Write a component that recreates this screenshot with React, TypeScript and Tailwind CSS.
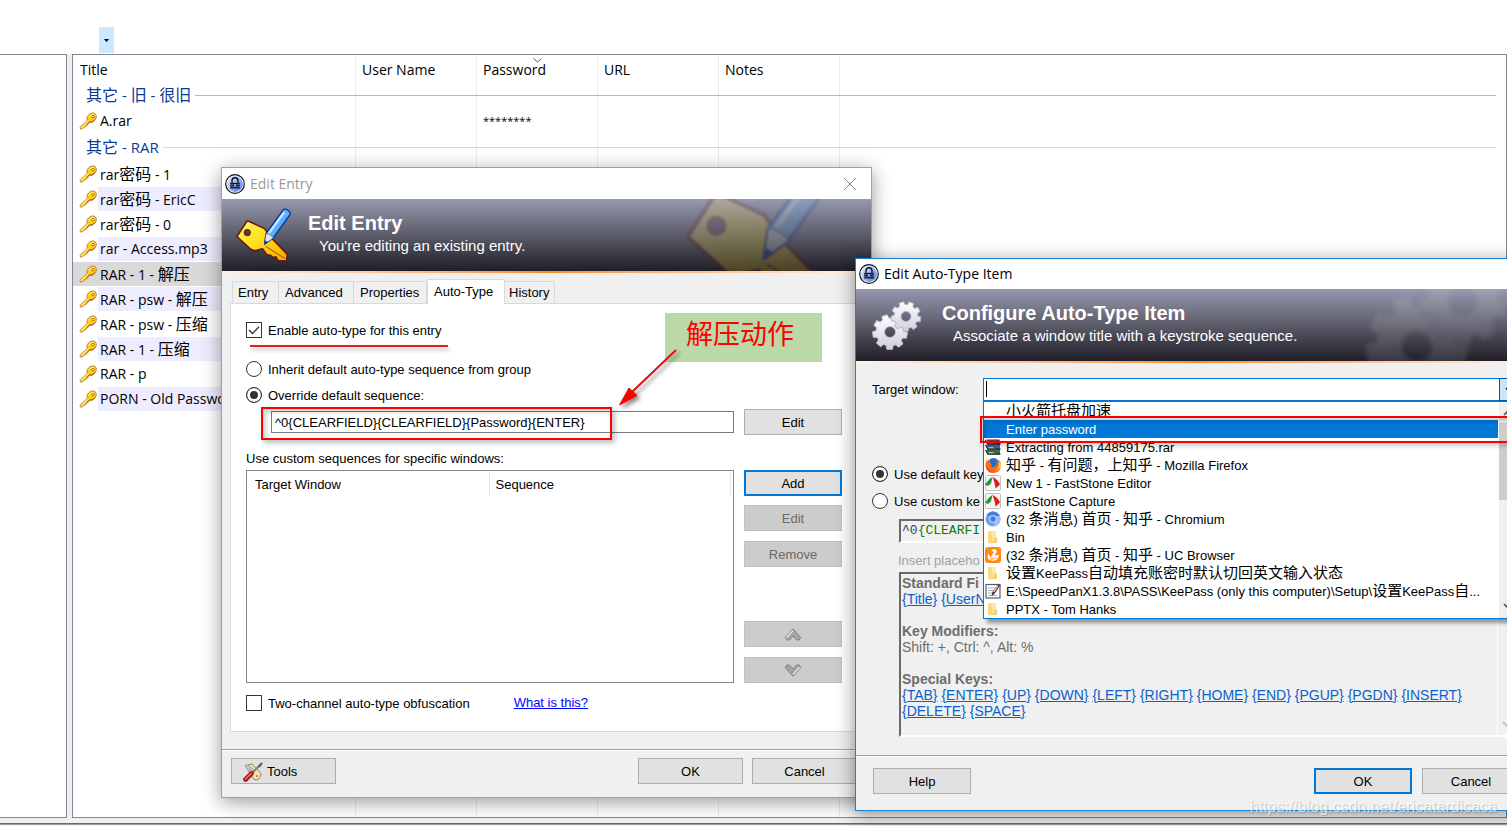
import React from "react";

const UI = "font-['Liberation_Sans','Noto_Sans_CJK_SC',sans-serif]";
const SYS = "font-['Open_Sans','Noto_Sans_CJK_SC',sans-serif]";

/* Sets runs of Chinese characters in their own size next to Latin text. */
function Mixed({ text, cjk }: { text: string; cjk: string }) {
  const parts = text.split(/([\u3400-\u9fff\uff0c]+)/).filter(Boolean);
  return (
    <>
      {parts.map((p, i) =>
        /[\u3400-\u9fff\uff0c]/.test(p) ? (
          <span key={i} className={cjk}>{p}</span>
        ) : (
          <React.Fragment key={i}>{p}</React.Fragment>
        ),
      )}
    </>
  );
}

function KeyIcon() {
  return (
    <svg viewBox="0 0 18 18" className="h-[18px] w-[18px] shrink-0" aria-hidden="true">
      <path
        d="M1 15.2 8.3 8.4C7.600 6.400 8 4.500 9.600 2.900 11.500.8 14.700.3 16.400 1.900 18 3.500 17.500 6.500 15.500 8.500c-1.600 1.600-3.300 2.100-5.100 1.600l-1.200 1.200-.3 1.500-1.500.2-.4 1.500-1.600.3L4 16.500l-2.500.6Z"
        fill="#fc1"
        stroke="#b98a3a"
        strokeWidth="1"
      />
      <path d="M2 15.800 9.400 8.900" stroke="#ffee70" strokeWidth="1.200" />
      <path d="M10 5.500c.8-2.200 3-3.600 5-3" stroke="#fff3a0" strokeWidth="1" fill="none" />
      <path d="m8 12.600 2.500-2.800c2 .6 4-.2 5.400-2.200" stroke="#8f3a1c" strokeWidth=".8" fill="none" />
      <circle cx="13.900" cy="4.600" r="1.200" fill="#fff" stroke="#8f5a1c" strokeWidth=".8" />
    </svg>
  );
}

function LockIcon({ id }: { id: string }) {
  return (
    <svg viewBox="0 0 20 20" className="h-5 w-5 shrink-0" aria-hidden="true">
      <defs>
        <linearGradient id={id} x1="0" y1="0" x2="1" y2="1">
          <stop offset="0" stopColor="#f0f4ff" />
          <stop offset=".5" stopColor="#9db4fa" />
          <stop offset="1" stopColor="#4a70ee" />
        </linearGradient>
      </defs>
      <circle cx="10" cy="10" r="9.300" fill="#fff" stroke="#111" strokeWidth="1.200" />
      <circle cx="10" cy="10" r="7.900" fill={`url(#${id})`} />
      <path d="M7 8.800V6.800a3 3 0 0 1 6 0v2" fill="none" stroke="#111" strokeWidth="1.400" />
      <rect x="5.200" y="8.800" width="9.600" height="5.700" fill="#15171f" />
      <path d="M5 10.700h10M5 12.700h10" stroke="#7f98ea" strokeWidth=".6" />
      <rect x="9.300" y="10.200" width="1.400" height="2.400" fill="#c8d4ff" />
    </svg>
  );
}

function EditKeyArt({ className, id }: { className: string; id: string }) {
  return (
    <svg viewBox="0 0 58 58" className={className} aria-hidden="true">
      <defs>
        <linearGradient id={`${id}k`} x1="0" y1="0" x2="1" y2="1">
          <stop offset="0" stopColor="#fff36a" />
          <stop offset=".45" stopColor="#ffe11a" />
          <stop offset="1" stopColor="#f7a400" />
        </linearGradient>
        <linearGradient id={`${id}p`} x1="0" y1="0" x2="1" y2="1">
          <stop offset="0" stopColor="#8fd0ff" />
          <stop offset=".5" stopColor="#5fb0ff" />
          <stop offset="1" stopColor="#0a3fd0" />
        </linearGradient>
      </defs>
      <path
        d="M1 30 11 14.500 13 14.500 29 22 36 31.500 52 48 51.500 55 43 54.500 40.500 50.500 38 51.500 35 49 31.500 48.500 27 42.500 19 44.500 15 43Z"
        fill={`url(#${id}k)`}
        stroke="#6a1608"
        strokeWidth="1.500"
        strokeLinejoin="round"
      />
      <path d="m30 40 20 12.500" stroke="#b86a00" strokeWidth="1.200" />
      <circle cx="11.500" cy="26" r="3" fill="#4c3a4a" stroke="#7a2a10" strokeWidth="1.400" />
      <path d="m29 38 1.500-11L48.500 2.500c2.500-1 6.500 1.500 7 4.500L38 31.500Z" fill={`url(#${id}p)`} stroke="#0a2f96" strokeWidth="1.300" strokeLinejoin="round" />
      <path d="m29 38 1.500-11c2.500 0 6 2 7.500 4.500Z" fill="#e8e6f2" stroke="#3a4a9a" strokeWidth=".6" />
      <path d="M33.500 26.500 49 5.500" stroke="#c9ecff" strokeWidth="2" />
      <path d="m29 38 .5-4 3 1.800Z" fill="#0a1f8a" />
    </svg>
  );
}

function gearPath(cx: number, cy: number, ro: number, ri: number, hole: number) {
  const n = 9;
  let d = "";
  for (let i = 0; i < n; i++) {
    const a = (i / n) * Math.PI * 2 + 0.2;
    const pts = [
      [ri, a - 0.24],
      [ro, a - 0.16],
      [ro, a + 0.16],
      [ri, a + 0.24],
    ];
    for (const [r, t] of pts) {
      d += `${d ? "L" : "M"}${(cx + r * Math.cos(t)).toFixed(2)} ${(cy + r * Math.sin(t)).toFixed(2)}`;
    }
  }
  return `${d}ZM${cx - hole} ${cy}a${hole} ${hole} 0 1 0 ${hole * 2} 0a${hole} ${hole} 0 1 0 ${-hole * 2} 0Z`;
}

function GearsArt({ className, id }: { className: string; id: string }) {
  return (
    <svg viewBox="0 0 50 50" className={className} aria-hidden="true">
      <defs>
        <linearGradient id={id} x1="0" y1="0" x2="0" y2="1">
          <stop offset="0" stopColor="#ffffff" />
          <stop offset="1" stopColor="#cfcfdd" />
        </linearGradient>
      </defs>
      <path d={gearPath(18, 31, 17.5, 14, 5.5)} fill={`url(#${id})`} stroke="#c4c4d2" strokeWidth="1" strokeLinejoin="round" fillRule="evenodd" />
      <path d={gearPath(34, 15.5, 15, 12, 5)} fill={`url(#${id})`} stroke="#b4b4c6" strokeWidth="1" strokeLinejoin="round" fillRule="evenodd" />
    </svg>
  );
}

function Banner({ title, sub, art, ghost }: { title: string; sub: string; art: React.ReactNode; ghost: React.ReactNode }) {
  return (
    <div className="shrink-0">
      <div className="relative flex h-[72px] overflow-hidden bg-linear-to-b from-[#9799af] via-[#5c5c6a] to-[#201f29]">
        {ghost}
        <div className="w-[86px] shrink-0 pt-2 pl-[14px]">{art}</div>
        <div className="relative pt-3 text-white">
          <h2 className="text-[20px] leading-6 font-bold">{title}</h2>
          <p className="pl-[11px] text-[15px] leading-[22px]">{sub}</p>
        </div>
      </div>
      <div className="h-[2px] bg-linear-to-r from-[#fff4ea] via-[#ff8a1e] to-[#fff4ea]" />
    </div>
  );
}

const BTN = "flex h-[26px] shrink-0 items-center justify-center border pt-px text-[13px]";
const NORMAL = "border-[#adadad] bg-[#e1e1e1] text-black";
const DISABLED = "border-[#bfbfbf] bg-[#cccccc] text-[#6a6a6a]";
const DEFAULT = "border-2 border-[#0078d7] bg-[#e1e1e1] text-black";
const RADIO =
  "h-4 w-4 shrink-0 appearance-none rounded-full border border-[#333] bg-white checked:bg-[#333] checked:shadow-[inset_0_0_0_3px_white]";

function Check({ id, label, checked }: { id: string; label: string; checked?: boolean }) {
  return (
    <span className="flex h-4 items-center gap-[6px]">
      <span className="relative h-4 w-4">
        <input id={id} type="checkbox" defaultChecked={checked} className="peer block h-4 w-4 appearance-none border border-[#333] bg-white" />
        <svg viewBox="0 0 16 16" className="pointer-events-none absolute inset-0 hidden h-4 w-4 peer-checked:block" aria-hidden="true">
          <path d="m3 8 3.500 3.500L13 4.800" fill="none" stroke="#333" strokeWidth="1.300" />
        </svg>
      </span>
      <label htmlFor={id} className="pt-[2px]">{label}</label>
    </span>
  );
}

function Radio({ id, name, label, checked }: { id: string; name: string; label: string; checked?: boolean }) {
  return (
    <span className="flex h-4 items-center gap-[6px]">
      <input id={id} type="radio" name={name} defaultChecked={checked} className={RADIO} />
      <label htmlFor={id} className="pt-[2px]">{label}</label>
    </span>
  );
}

const ENTRIES = [
  "rar密码 - 1",
  "rar密码 - EricC",
  "rar密码 - 0",
  "rar - Access.mp3",
  "RAR - 1 - 解压",
  "RAR - psw - 解压",
  "RAR - psw - 压缩",
  "RAR - 1 - 压缩",
  "RAR - p",
  "PORN - Old Password",
];

function GroupRow({ text, height, line }: { text: string; height: string; line: string }) {
  return (
    <tr>
      <th colSpan={6} scope="rowgroup" className="p-0 text-left font-normal">
        <div className={`flex items-center gap-1 pr-[10px] pl-[13px] text-[15px] leading-4 text-[#0a3a9c] ${height}`}>
          <span className="whitespace-nowrap"><Mixed text={text} cjk="text-[16px]" /></span>
          <span className={line} />
        </div>
      </th>
    </tr>
  );
}

function EntryRow({ text, shade, selected, password }: { text: string; shade?: boolean; selected?: boolean; password?: string }) {
  const fill = selected ? "bg-[#d9d9d9]" : shade ? "bg-[#eeedff]" : "";
  return (
    <tr className="h-[25px]">
      <td className="p-0">
        <div className={`flex h-6 items-center pl-[6px] ${selected ? "bg-[#d9d9d9]" : ""}`}>
          <KeyIcon />
          <span className={`ml-px flex h-6 flex-1 items-center overflow-hidden pl-[2px] whitespace-pre ${fill}`}>
            <span><Mixed text={text} cjk="text-[16px]" /></span>
          </span>
        </div>
      </td>
      <td className="p-0"><div className={`h-6 ${fill}`} /></td>
      <td className="p-0"><div className={`h-6 pl-[6px] text-[11px] leading-6 ${fill}`}>{password}</div></td>
      <td className="p-0"><div className={`h-6 ${fill}`} /></td>
      <td className="p-0"><div className={`h-6 ${fill}`} /></td>
      <td className="p-0" />
    </tr>
  );
}

function MainWindow() {
  return (
    <div className={`flex min-h-screen flex-col bg-white text-[14px] text-black ${SYS}`}>
      <div className="flex h-[54px] shrink-0 items-end pl-[99px]">
        <button aria-label="Toolbar options" className="mb-[1px] flex h-[26px] w-[15px] items-center justify-center bg-[#cce8ff]">
          <svg viewBox="0 0 5 3" className="h-[3px] w-[5px]" aria-hidden="true"><path d="M0 0h5L2.500 3Z" fill="#000" /></svg>
        </button>
      </div>
      <div className="flex flex-1 gap-[5px] bg-[#f0f0f0]">
        <div className="w-[67px] shrink-0 border border-l-0 border-[#828790] bg-white" />
        <div className="relative flex-1 border border-[#828790] bg-white">
          <div aria-hidden="true" className="absolute inset-0 flex">
            <div className="w-[283px] border-r border-[#e5edf9]" />
            <div className="w-[121px] border-r border-[#e5edf9]" />
            <div className="w-[121px] border-r border-[#e5edf9]" />
            <div className="w-[121px] border-r border-[#e5edf9]" />
            <div className="w-[121px] border-r border-[#e5edf9]" />
          </div>
          <table className="relative w-full table-fixed border-collapse">
            <colgroup>
              <col className="w-[283px]" />
              <col className="w-[121px]" />
              <col className="w-[121px]" />
              <col className="w-[121px]" />
              <col className="w-[121px]" />
              <col />
            </colgroup>
            <thead>
              <tr className="h-[27px] text-left">
                <th className="p-0 pt-[2px] pl-[7px] font-normal">Title</th>
                <th className="p-0 pt-[2px] pl-[6px] font-normal">User Name</th>
                <th className="relative p-0 pt-[2px] pl-[6px] font-normal">
                  Password
                  <svg viewBox="0 0 9 5" className="absolute top-[3px] left-[56px] h-[5px] w-[9px]" aria-hidden="true">
                    <path d="m.5.500 4 3.500 4-3.500" fill="none" stroke="#555" strokeWidth="1" />
                  </svg>
                </th>
                <th className="p-0 pt-[2px] pl-[6px] font-normal">URL</th>
                <th className="p-0 pt-[2px] pl-[6px] font-normal">Notes</th>
                <th className="p-0" />
              </tr>
            </thead>
            <tbody>
              <GroupRow text="其它 - 旧 - 很旧" height="h-[26px]" line="h-px flex-1 bg-[#a9b8de]" />
              <EntryRow text="A.rar" password="********" />
              <GroupRow text="其它 - RAR" height="h-[28px]" line="h-px flex-1 bg-[#d0d8ee]" />
              {ENTRIES.map((t, i) => (
                <EntryRow key={t} text={t} shade={i % 2 === 1} selected={i === 4} />
              ))}
            </tbody>
          </table>
        </div>
      </div>
      <div className="h-2 shrink-0 bg-[#f0f0f0] pt-[5px]"><div className="h-[2px] border-t border-[#696969] bg-[#a0a0a0]" /></div>
    </div>
  );
}

function UpDown({ down }: { down?: boolean }) {
  return (
    <svg viewBox="0 0 18 13" className={`h-[13px] w-[18px] ${down ? "rotate-180" : ""}`} aria-hidden="true">
      <path d="M9 .8 16.800 9.500 15 12.200 12.200 11.800 9 8 5.800 11.800 3 12.200 1.200 9.500Z" fill="#a4a4a4" stroke="#858585" strokeWidth="1" strokeLinejoin="round" />
      <path d="M2.500 9.800 9 2.500" stroke="#e4e4e4" strokeWidth="1.400" />
    </svg>
  );
}

function EditEntryDialog() {
  const tab = "flex h-[22px] items-center border-t border-r border-[#d9d9d9] bg-[#f0f0f0] pt-px";
  return (
    <section
      aria-label="Edit Entry"
      className={`absolute top-[167px] left-[221px] flex w-[651px] flex-col border border-[#a0a0a0] bg-[#f0f0f0] text-[13px] leading-4 text-black shadow-[0_4px_18px_rgba(0,0,0,0.4)] ${UI}`}
    >
      <header className={`flex h-[31px] items-center bg-white pl-[3px] text-[14px] text-[#999] ${SYS}`}>
        <LockIcon id="lockA" />
        <h1 className="ml-[5px]">Edit Entry</h1>
        <button aria-label="Close" className="mr-[15px] ml-auto">
          <svg viewBox="0 0 12 12" className="h-3 w-3" aria-hidden="true"><path d="m0 0 12 12M12 0 0 12" stroke="#8a8a8a" strokeWidth="1" /></svg>
        </button>
      </header>
      <Banner
        title="Edit Entry"
        sub="You're editing an existing entry."
        art={<EditKeyArt id="ekA" className="h-[57px] w-[57px]" />}
        ghost={<EditKeyArt id="ekB" className="absolute -top-11 right-7 h-[158px] w-[158px] opacity-20 blur-[1px]" />}
      />
      <div className="px-2 pt-[6px]">
        <div role="tablist" className="flex items-end pl-[2px]">
          <button role="tab" className={`${tab} w-[47px] border-l pl-[5px]`}>Entry</button>
          <button role="tab" className={`${tab} w-[75px] pl-[6px]`}>Advanced</button>
          <button role="tab" className={`${tab} w-[73px] pl-[6px]`}>Properties</button>
          <button role="tab" aria-selected="true" className="relative -mb-px flex h-[25px] w-[78px] items-center border border-b-0 border-[#d9d9d9] bg-white pl-[6px]">Auto-Type</button>
          <button role="tab" className={`${tab} w-[50px] pl-1`}>History</button>
        </div>
        <div role="tabpanel" className="border border-[#d9d9d9] bg-white pt-[18px] pr-5 pb-5 pl-[15px]">
          <Check id="enable" label="Enable auto-type for this entry" checked />
          <div className="mt-[7px] ml-1 h-[2px] w-[198px] bg-[#e02020] shadow-[1px_3px_4px_rgba(0,0,0,0.3)]" />
          <div className="mt-[14px] flex flex-col gap-[10px]">
            <Radio id="inherit" name="seq" label="Inherit default auto-type sequence from group" />
            <Radio id="override" name="seq" label="Override default sequence:" checked />
          </div>
          <div className="relative mt-[6px] flex items-center gap-[10px]">
            <input
              aria-label="Default sequence"
              defaultValue="^0{CLEARFIELD}{CLEARFIELD}{Password}{ENTER}"
              className="ml-[25px] h-[22px] w-[463px] border border-[#7a7a7a] bg-white pl-[3px] text-[13px]"
            />
            <button className={`${BTN} ${NORMAL} w-[98px]`}>Edit</button>
            <div className="pointer-events-none absolute -top-[2px] left-[15px] h-[33px] w-[351px] border-2 border-[#f00] shadow-[3px_3px_5px_rgba(0,0,0,0.25),inset_3px_3px_5px_rgba(0,0,0,0.2)]" />
          </div>
          <p className="mt-4">Use custom sequences for specific windows:</p>
          <div className="mt-[3px] flex gap-[10px]">
            <div className="w-[488px] border border-[#828790] bg-white pt-px pr-[2px]">
              <table className="w-full table-fixed border-collapse">
                <thead>
                  <tr className="h-6 text-left">
                    <th className="w-[242px] border-r border-[#e5e5e5] p-0 pt-[2px] pl-2 font-normal">Target Window</th>
                    <th className="border-r border-[#e5e5e5] p-0 pt-[2px] pl-[6px] font-normal">Sequence</th>
                  </tr>
                </thead>
              </table>
            </div>
            <div className="flex w-[98px] flex-col">
              <button className={`${BTN} ${DEFAULT}`}>Add</button>
              <button disabled className={`${BTN} ${DISABLED} mt-[9px]`}>Edit</button>
              <button disabled className={`${BTN} ${DISABLED} mt-[10px]`}>Remove</button>
              <button disabled aria-label="Move up" className={`${BTN} ${DISABLED} mt-[54px]`}><UpDown /></button>
              <button disabled aria-label="Move down" className={`${BTN} ${DISABLED} mt-[10px]`}><UpDown down /></button>
            </div>
          </div>
          <div className="mt-3 flex items-center gap-11">
            <Check id="obfuscate" label="Two-channel auto-type obfuscation" />
            <a href="#help" className="text-[#0000ff] underline">What is this?</a>
          </div>
        </div>
      </div>
      <footer className="mt-[17px] flex gap-[9px] border-t border-[#a0a0a0] pt-2 pr-[14px] pb-[13px] pl-[9px] shadow-[inset_0_1px_0_white]">
        <button className={`${BTN} ${NORMAL} mr-auto w-[105px] !justify-start gap-1 pl-[11px]`}>
          <svg viewBox="0 0 20 20" className="h-5 w-5" aria-hidden="true">
            <path d="M2 3.500 9 2l9 9.500-.5 3.500-3.500 3-3-.5Z" fill="#f2e2a8" stroke="#8f8468" strokeWidth="1" />
            <path d="m2 4 7 6M5 3l7 7" stroke="#b8b8b8" strokeWidth="2" />
            <path d="m8 12 8.500-8.500" stroke="#7f858c" strokeWidth="2" />
            <path d="m15.500 5 3.500-4" stroke="#596068" strokeWidth="2.200" />
            <path d="m2.500 17.500 6-6" stroke="#a81818" strokeWidth="4.600" strokeLinecap="round" />
            <path d="m2.500 17 5.500-5.500" stroke="#ff6a5a" strokeWidth="1.600" strokeLinecap="round" />
            <circle cx="14" cy="14" r="1" fill="#a08540" />
          </svg>
          Tools
        </button>
        <button className={`${BTN} ${NORMAL} w-[105px]`}>OK</button>
        <button className={`${BTN} ${NORMAL} w-[105px]`}>Cancel</button>
      </footer>
    </section>
  );
}

function AppIcon({ kind }: { kind: string }) {
  const c = "h-4 w-4 shrink-0";
  switch (kind) {
    case "rar":
      return (
        <svg viewBox="0 0 16 16" className={c} aria-hidden="true">
          <path d="M2 .5h12.500l1 4.500H3Z" fill="#8b1c4c" />
          <path d="M1.500 5.500H15v4.500H3Z" fill="#2a6fc0" />
          <path d="M1.500 10.500H15V15H3Z" fill="#1e7a3a" />
          <path d="M.5 1 3 5.200h12.500M.5 6 3 10.200h12.500M.5 11 3 15.200h12.500" stroke="#1a1010" strokeWidth="1.200" fill="none" />
          <path d="M3.500 3.800h5M3.500 8.800h5M3.500 13.800h5" stroke="#e8e0d0" strokeWidth="1" />
          <path d="M10 .5v4.500M10 5.500V10M10 10.500V15" stroke="#8a4a2a" strokeWidth="1.600" />
        </svg>
      );
    case "firefox":
      return (
        <svg viewBox="0 0 16 16" className={c} aria-hidden="true">
          <circle cx="8.500" cy="7.500" r="6.500" fill="#1f6fd0" />
          <path d="M1 5C.3 7.500.3 10 1.500 12A7.500 7.500 0 0 0 15.700 9c.4-2.500-.2-4.600-1.700-6.200.3 1.500.2 2.500-.2 3.200C13 3.500 11.500 1.500 9.500.8c2 2 3 4.500 2 7-.8 2-3 2.600-4.500 2C5.500 9.200 5.500 8 7 7.500 6 6.500 5 6 5 5c-.5-1 0-1.800.5-2.500C4 2.500 3 3.500 2.500 4.200 2 4 1.700 3 1.800 2.500 1.300 3.200 1 4 1 5Z" fill="#ff6a13" />
          <path d="M13.800 6c.5 3-1 6-4 7 3.500 0 5.500-2 6-4.500.2-2.200-.3-4.200-1.800-5.700.3 1.200.2 2.200-.2 3.200Z" fill="#ffd02e" />
          <path d="M1.300 7c0 4 2.700 7 6.700 7.500C4.500 15.500.5 12.500 1.300 7Z" fill="#e2212d" />
        </svg>
      );
    case "fast":
      return (
        <svg viewBox="0 0 16 16" className={c} aria-hidden="true">
          <rect x=".5" y=".5" width="15" height="15" rx="1" fill="#f6f6f6" stroke="#c0c0c0" />
          <path d="M0 9.500 4.500 4 7.500 2 6 8.500 3 11Z" fill="#1f9a34" />
          <path d="M7.500 2C10.500 3 14 6.500 15 9.500L10.500 13.500C10 9 9 5.500 7.500 2Z" fill="#e81818" />
        </svg>
      );
    case "chromium":
      return (
        <svg viewBox="0 0 16 16" className={c} aria-hidden="true">
          <circle cx="8" cy="8" r="7.500" fill="#6f9ff0" /><path d="M1.500 4.200A7.500 7.500 0 0 1 14.800 5H8Z" fill="#4a7fe0" />
          <path d="M15.500 8A7.500 7.500 0 0 1 8 15.500L11 9.500V5h3.800c.5 1 .7 2 .7 3Z" fill="#9cc0fb" />
          <circle cx="8" cy="8" r="3.700" fill="#cfe0ff" /><circle cx="8" cy="8" r="2.700" fill="#3f78e0" />
        </svg>
      );
    case "uc":
      return (
        <svg viewBox="0 0 16 16" className={c} aria-hidden="true">
          <rect width="16" height="16" rx="3" fill="#ff8a10" />
          <path d="M8 2.500c2-1 4 .5 3.500 2.500-.3 1.500-2 2-1.500 3 .5.800 2.500.5 4-.5-.3 3.500-2.500 6-6 6.200-3 .1-5.500-1.700-5.500-4.200C2.500 8 3 7 4 6.500c0 2 1 3.500 2.500 3.800C6 8 9 6.500 8.800 5 8.500 4 7.500 4 6.500 4.500c.2-1 .7-1.700 1.500-2Z" fill="#fff" />
          <path d="M5 11.500c2 1 4.500.5 6-1" stroke="#ff8a10" strokeWidth="1" fill="none" />
        </svg>
      );
    case "folder":
      return (
        <svg viewBox="0 0 16 16" className={c} aria-hidden="true">
          <path d="M3 2h8v12H3Z" fill="#ffe9a2" /><path d="M3 2h3.500l1.500 12.500L3 14Z" fill="#fbd97e" /><path d="M9 8.500h3V14H8Z" fill="#f4cf74" />
        </svg>
      );
    case "note":
      return (
        <svg viewBox="0 0 16 16" className={c} aria-hidden="true">
          <rect x="1" y="1.500" width="14" height="13.500" fill="#fff" stroke="#555a80" strokeWidth="1.200" />
          <path d="M3 5h7M3 7.500h6M3 10h5M3 12.500h9" stroke="#a9adc8" strokeWidth="1" />
          <path d="m6.500 13 .8-4L13 1l2 1.500-5.500 8.500Z" fill="#3a3a44" />
          <path d="m8.500 9 4.500-6.500" stroke="#f0c98a" strokeWidth="1.400" />
          <path d="m13.500.8 2 1.700-1 1.500-2-1.700Z" fill="#c02a3a" />
        </svg>
      );
    default:
      return <span className={c} />;
  }
}

const WINDOWS: [string, string][] = [
  ["", "小火箭托盘加速"],
  ["", "Enter password"],
  ["rar", "Extracting from 44859175.rar"],
  ["firefox", "知乎 - 有问题，上知乎 - Mozilla Firefox"],
  ["fast", "New 1 - FastStone Editor"],
  ["fast", "FastStone Capture"],
  ["chromium", "(32 条消息) 首页 - 知乎 - Chromium"],
  ["folder", "Bin"],
  ["uc", "(32 条消息) 首页 - 知乎 - UC Browser"],
  ["folder", "设置KeePass自动填充账密时默认切回英文输入状态"],
  ["note", "E:\\SpeedPanX1.3.8\\PASS\\KeePass (only this computer)\\Setup\\设置KeePass自..."],
  ["folder", "PPTX - Tom Hanks"],
];

const KEYS = ["{TAB}", "{ENTER}", "{UP}", "{DOWN}", "{LEFT}", "{RIGHT}", "{HOME}", "{END}", "{PGUP}", "{PGDN}", "{INSERT}", "{DELETE}", "{SPACE}"];

function Chevron({ up, tone }: { up?: boolean; tone: string }) {
  return (
    <svg viewBox="0 0 10 6" className={`h-[6px] w-[10px] ${up ? "rotate-180" : ""}`} aria-hidden="true">
      <path d="m1 1 4 4 4-4" fill="none" stroke={tone} strokeWidth="1.600" />
    </svg>
  );
}

function Placeholders({ names }: { names: string[] }) {
  return (
    <>
      {names.map((n) => (
        <React.Fragment key={n}>
          <a href="#insert" className="whitespace-nowrap text-[#0a63cc] underline">{n}</a>{" "}
        </React.Fragment>
      ))}
    </>
  );
}

function AutoTypeDialog() {
  return (
    <section
      aria-label="Edit Auto-Type Item"
      className={`absolute top-[258px] left-[855px] flex w-[682px] flex-col border border-[#1883d7] bg-[#f0f0f0] text-[13px] leading-4 text-black shadow-[0_4px_18px_rgba(0,0,0,0.45)] ${UI}`}
    >
      <header className={`flex h-[30px] items-center bg-white pl-[3px] text-[14px] ${SYS}`}>
        <LockIcon id="lockB" />
        <h1 className="ml-[5px]">Edit Auto-Type Item</h1>
      </header>
      <Banner
        title="Configure Auto-Type Item"
        sub="Associate a window title with a keystroke sequence."
        art={<GearsArt id="gA" className="mt-1 ml-[2px] h-[50px] w-[50px]" />}
        ghost={<GearsArt id="gB" className="absolute -top-8 right-[27px] h-[144px] w-[144px] opacity-12 blur-[2px]" />}
      />
      <div className="pt-[15px] pl-4">
        <div className="flex items-center">
          <label htmlFor="target" className="w-[111px] shrink-0">Target window:</label>
          <div className="relative flex h-6 flex-1">
            <input id="target" defaultValue="" className="h-[23px] w-[517px] border border-[#0078d7] bg-white" />
            <span className="absolute top-[3px] left-[3px] h-4 w-px bg-black" />
            <button aria-label="Open list" className="-ml-px flex h-[23px] w-[22px] items-center justify-center border border-[#005499] bg-[#cce4f7]"><Chevron tone="#222" /></button>
            <div className="absolute top-[23px] left-0 z-10 flex w-[538px] border border-[#0078d7] bg-white shadow-[4px_4px_4px_rgba(0,0,0,0.4)]">
              <ul role="listbox" aria-label="Open windows" className="w-[514px] shrink-0">
                {WINDOWS.map(([icon, text], i) => (
                  <li
                    key={text}
                    role="option"
                    aria-selected={i === 1}
                    className={`flex h-[18px] items-center gap-[5px] overflow-hidden pl-px whitespace-nowrap ${i === 1 ? "bg-[#0078d7] text-white" : ""}`}
                  >
                    <AppIcon kind={icon} />
                    <span className="pt-px"><Mixed text={text} cjk="text-[15px]" /></span>
                  </li>
                ))}
              </ul>
              <div className="ml-px flex flex-1 flex-col items-start bg-[#f0f0f0]">
                <div className="flex h-[21px] items-center pl-1"><Chevron up tone="#555" /></div>
                <div className="h-[77px] w-full bg-[#cdcdcd]" />
                <div className="mt-auto flex h-6 items-center pl-1"><Chevron tone="#555" /></div>
              </div>
            </div>
            <div className="pointer-events-none absolute top-[38px] -left-[3px] z-20 h-[27px] w-[560px] border-2 border-[#f00] shadow-[3px_3px_5px_rgba(0,0,0,0.2),inset_3px_3px_5px_rgba(0,0,0,0.2)]" />
          </div>
        </div>
        <div className="mt-16 flex flex-col gap-[11px]">
          <Radio id="usedef" name="key" label="Use default key" checked />
          <Radio id="usecustom" name="key" label="Use custom ke" />
        </div>
        <div className="mt-[10px] ml-[27px] h-6 w-[615px] border-2 border-[#696969] border-r-white border-b-white pl-px font-['Liberation_Mono',monospace] leading-5">
          <span className="text-[#1a2a6a]">^</span><span className="text-[#444]">0</span>
          <span className="text-[#008000]">{"{CLEARFI"}</span>
        </div>
        <p className="mt-[10px] ml-[26px] text-[#a0a0a0]">Insert placeho</p>
        <div className="mt-[3px] ml-[27px] flex h-[165px] w-[615px] border-2 border-[#696969] border-r-white border-b-white text-[14px] text-[#6d6d6d]">
          <div className="w-[596px] pt-px pl-px">
            <p className="font-bold">Standard Fi</p>
            <p><Placeholders names={["{Title}", "{UserN"]} /></p>
            <p className="mt-4 font-bold">Key Modifiers:</p>
            <p>Shift: +, Ctrl: ^, Alt: %</p>
            <p className="mt-4 font-bold">Special Keys:</p>
            <p className="pr-8"><Placeholders names={KEYS} /></p>
          </div>
          <div className="flex flex-1 items-end border-l border-white pb-2 pl-1"><Chevron tone="#bbb" /></div>
        </div>
      </div>
      <footer className="mt-[18px] flex gap-[10px] border-t border-[#a0a0a0] pt-3 pr-4 pb-4 pl-[17px] shadow-[inset_0_1px_0_white]">
        <button className={`${BTN} ${NORMAL} mr-auto w-[98px]`}>Help</button>
        <button className={`${BTN} ${DEFAULT} w-[98px]`}>OK</button>
        <button className={`${BTN} ${NORMAL} w-[98px]`}>Cancel</button>
      </footer>
    </section>
  );
}

export default function App() {
  return (
    <main className="relative min-h-screen overflow-hidden">
      <MainWindow />
      <EditEntryDialog />
      <div className={`absolute top-[313px] left-[665px] flex h-[49px] w-[157px] items-center bg-[#bcd8a8] pb-1 pl-[21px] text-[27px] leading-none text-[#f00] ${UI}`}>
        解压动作
      </div>
      <svg viewBox="0 0 70 66" className="absolute top-[345px] left-[612px] h-[66px] w-[70px] drop-shadow-[3px_3px_2px_rgba(0,0,0,0.45)]" aria-hidden="true">
        <path d="M64 5 20 47" stroke="#e01010" strokeWidth="2" />
        <path d="M7.500 60 17 43l8 7.500Z" fill="#f00" stroke="#f00" />
      </svg>
      <AutoTypeDialog />
      <p className={`absolute right-[10px] bottom-[9px] text-[16px] leading-5 text-white/70 [text-shadow:1px_1px_1px_rgba(0,0,0,0.2)] ${UI}`}>
        https://blog.csdn.net/ericatardicaca
      </p>
    </main>
  );
}
